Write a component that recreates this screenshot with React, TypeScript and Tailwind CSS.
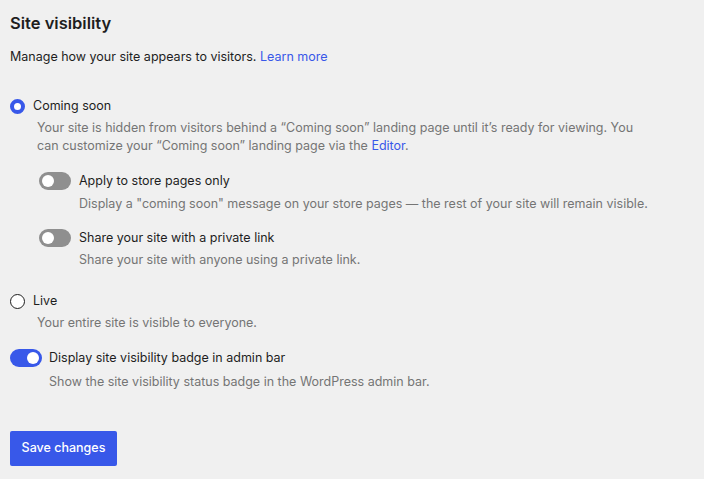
import React from "react";

const font = { fontFamily: "Inter, 'Noto Sans', sans-serif" };

function Toggle({ on }: { on?: boolean }) {
  return (
    <div
      className={`relative h-[18px] w-[32px] shrink-0 rounded-full ${on ? "bg-[#3858e9]" : "bg-[#8f8f8f]"}`}
    >
      <div
        className={`absolute top-[3px] h-[12px] w-[12px] rounded-full bg-white ${on ? "left-[17px]" : "left-[3px]"}`}
      />
    </div>
  );
}

export default function App() {
  return (
    <div className="min-h-[479px] w-full bg-[#f0f0f0] text-[#1e1e1e]" style={font}>
      <div className="max-w-[670px] px-[10px] pt-[12px]">
        <h1 className="text-[16.5px] font-semibold leading-[22px]">Site visibility</h1>
        <p className="mt-[13px] text-[12.5px] leading-[20px]">
          Manage how your site appears to visitors.{" "}
          <span className="text-[#3858e9]">Learn more</span>
        </p>

        {/* Coming soon */}
        <div className="mt-[29px]">
          <div className="flex items-center gap-[8px]">
            <div className="h-[15px] w-[15px] rounded-full border-[4px] border-[#3858e9] bg-white" />
            <span className="text-[12.5px] leading-[20px]">Coming soon</span>
          </div>
          <div className="ml-[27px] mt-[3px] text-[12.5px] leading-[18px] text-[#757575]">
            Your site is hidden from visitors behind a “Coming soon” landing page until it’s ready for viewing. You
            <br />
            can customize your “Coming soon” landing page via the{" "}
            <span className="text-[#3858e9]">Editor</span>.
          </div>

          <div className="ml-[29px] mt-[16px]">
            <div className="flex items-center gap-[8px]">
              <Toggle />
              <span className="text-[12.5px] leading-[20px]">Apply to store pages only</span>
            </div>
            <div className="ml-[40px] mt-[4px] text-[12.5px] leading-[18px] text-[#757575]">
              Display a "coming soon" message on your store pages — the rest of your site will remain visible.
            </div>

            <div className="mt-[15px] flex items-center gap-[8px]">
              <Toggle />
              <span className="text-[12.5px] leading-[20px]">Share your site with a private link</span>
            </div>
            <div className="ml-[40px] mt-[3px] text-[12.5px] leading-[18px] text-[#757575]">
              Share your site with anyone using a private link.
            </div>
          </div>
        </div>

        {/* Live */}
        <div className="mt-[22px]">
          <div className="flex items-center gap-[8px]">
            <div className="h-[15px] w-[15px] rounded-full border-[1.5px] border-[#1e1e1e] bg-white" />
            <span className="text-[12.5px] leading-[20px]">Live</span>
          </div>
          <div className="ml-[27px] mt-[3px] text-[12.5px] leading-[18px] text-[#757575]">
            Your entire site is visible to everyone.
          </div>
        </div>

        {/* Badge toggle */}
        <div className="mt-[16px]">
          <div className="flex items-center gap-[7px]">
            <Toggle on />
            <span className="text-[12.5px] leading-[20px]">Display site visibility badge in admin bar</span>
          </div>
          <div className="ml-[39px] mt-[5px] text-[12.5px] leading-[18px] text-[#757575]">
            Show the site visibility status badge in the WordPress admin bar.
          </div>
        </div>

        <button className="mt-[40px] h-[35px] w-[107px] rounded-[2px] bg-[#3858e9] text-[12.5px] font-medium text-white">
          Save changes
        </button>
      </div>
    </div>
  );
}
